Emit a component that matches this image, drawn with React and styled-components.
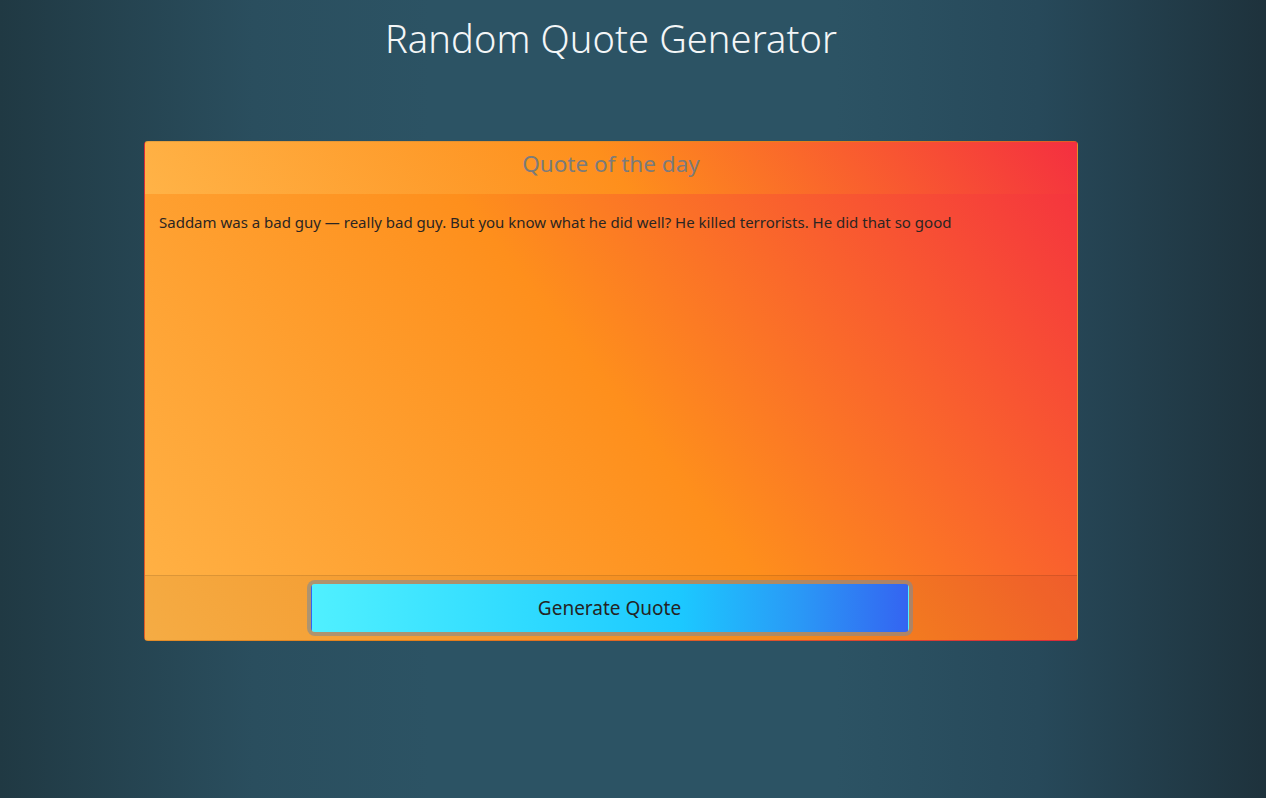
import React from "react";
import styled, { createGlobalStyle, css } from "styled-components";

const sunset = css`
  background: linear-gradient(52deg, #ffb347 0%, #fe8f1c 50%, #f42f40 100%);
`;

const GlobalStyle = createGlobalStyle`
  html, body {
    margin: 0;
    padding: 0;
    height: 100%;
  }
  body {
    font-family: "Noto Sans", "DejaVu Sans", sans-serif;
    background: linear-gradient(90deg, #203943 0%, #2a4e5e 20%, #2c5364 34%, #2c5364 66%, #27495a 82%, #1e323c 100%);
    min-height: 798px;
  }
  #root {
    min-height: 798px;
  }
`;

const Page = styled.main`
  width: 1222px;
  display: flex;
  flex-direction: column;
  align-items: center;
  padding-top: 16px;
`;

const Title = styled.h1`
  margin: 0 0 79px;
  font-family: "Noto Sans", sans-serif;
  font-weight: 300;
  font-size: 38px;
  line-height: 1.2;
  color: #f4f6f7;
  letter-spacing: 0.1px;
`;

const Card = styled.section`
  width: 934px;
  box-sizing: border-box;
  height: 500px;
  display: flex;
  flex-direction: column;
  border: 1px solid rgba(0, 0, 0, 0.1);
  border-radius: 4px;
  ${sunset};
  overflow: hidden;
`;

const CardHeader = styled.header`
  padding: 5px 20px 14px;
  line-height: 33px;
  font-size: 22.5px;
  color: #7b7b7b;
  text-align: center;
  ${sunset};
`;

const CardBody = styled.div`
  flex: 1;
  padding: 17px 14px;
  font-size: 15px;
  line-height: 1.5;
  color: #2b2522;
`;

const CardFooter = styled.footer`
  display: flex;
  justify-content: center;
  padding: 8px 15px;
  background: rgba(0, 0, 0, 0.04);
  border-top: 1px solid rgba(0, 0, 0, 0.1);
`;

const GenerateButton = styled.button`
  width: 598px;
  height: 48px;
  margin-left: -3px;
  border: 1px solid transparent;
  border-radius: 4px;
  background: linear-gradient(90deg, #50f0ff 0%, #30dbff 35%, #1cc8ff 62%, #2a98f6 82%, #3464f1 100%);
  box-shadow: 0 0 0 4px rgba(130, 138, 145, 0.62);
  font-family: "Noto Sans", sans-serif;
  font-size: 19px;
  color: #242424;
  cursor: pointer;
`;

export default function App() {
  return (
    <>
      <GlobalStyle />
      <Page>
        <Title>Random Quote Generator</Title>
        <Card>
          <CardHeader>Quote of the day</CardHeader>
          <CardBody>
            Saddam was a bad guy — really bad guy. But you know what he did well? He killed terrorists. He did that so good
          </CardBody>
          <CardFooter>
            <GenerateButton type="button">Generate Quote</GenerateButton>
          </CardFooter>
        </Card>
      </Page>
    </>
  );
}
